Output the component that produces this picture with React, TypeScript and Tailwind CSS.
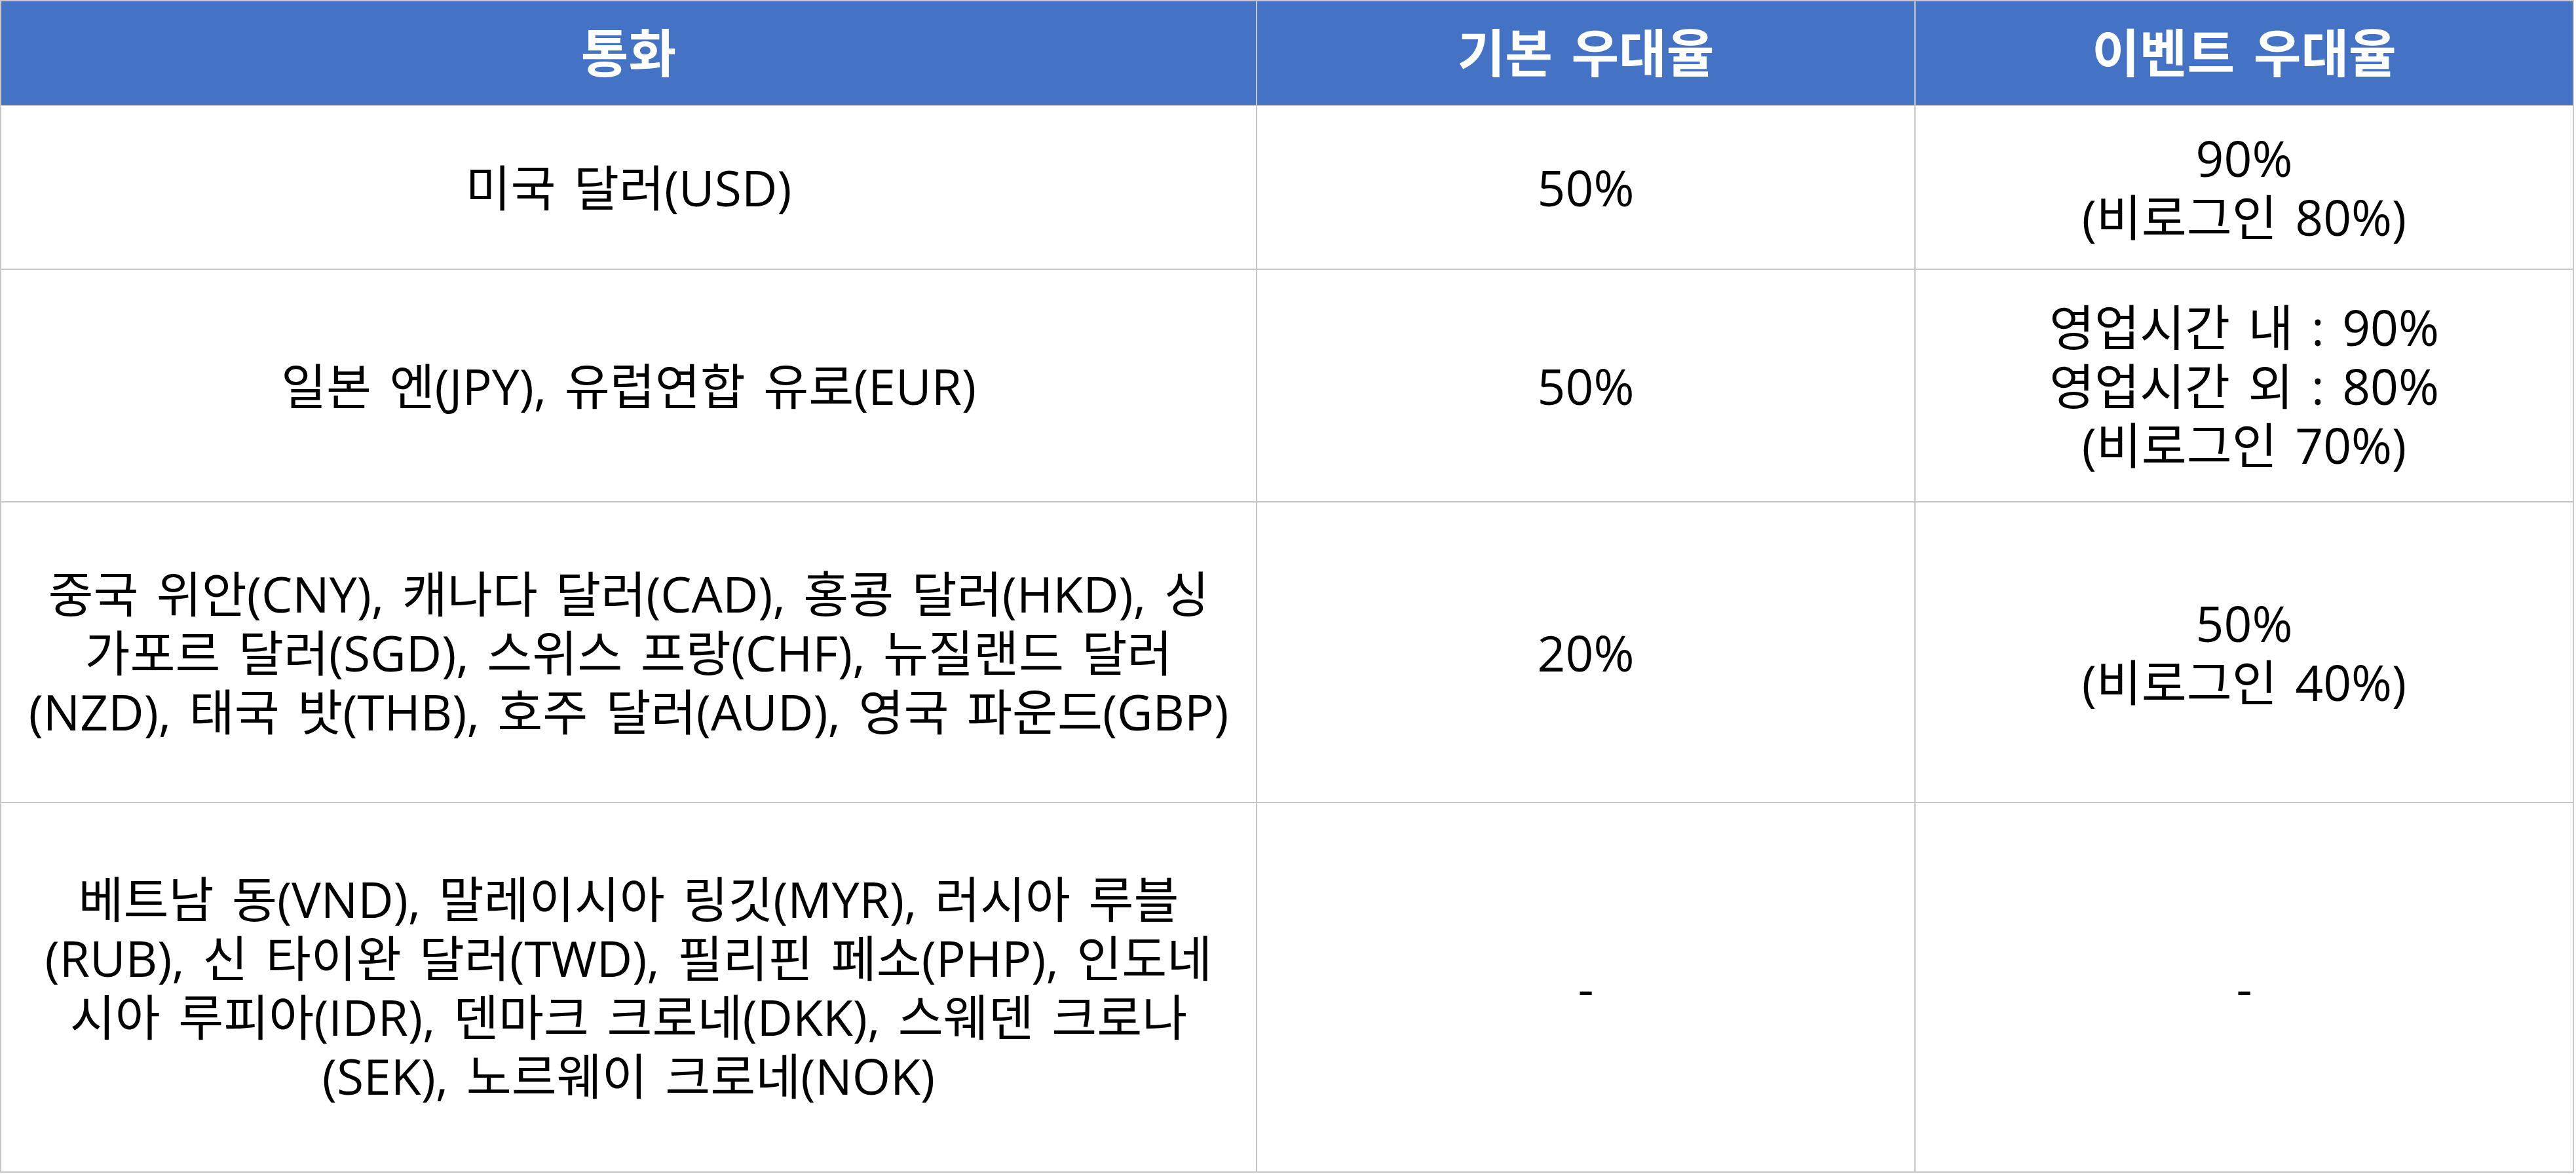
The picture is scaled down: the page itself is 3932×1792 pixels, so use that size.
import React from 'react'

// ── data ─────────────────────────────────────────────
type Row = {
  currency: string[]
  base: string[]
  event: string[]
}

const HEADERS = ['통화', '기본 우대율', '이벤트 우대율']

const ROWS: Row[] = [
  {
    currency: ['미국 달러(USD)'],
    base: ['50%'],
    event: ['90%', '(비로그인 80%)'],
  },
  {
    currency: ['일본 엔(JPY), 유럽연합 유로(EUR)'],
    base: ['50%'],
    event: ['영업시간 내 : 90%', '영업시간 외 : 80%', '(비로그인 70%)'],
  },
  {
    currency: [
      '중국 위안(CNY), 캐나다 달러(CAD), 홍콩 달러(HKD), 싱',
      '가포르 달러(SGD), 스위스 프랑(CHF), 뉴질랜드 달러',
      '(NZD), 태국 밧(THB), 호주 달러(AUD), 영국 파운드(GBP)',
    ],
    base: ['20%'],
    event: ['50%', '(비로그인 40%)'],
  },
  {
    currency: [
      '베트남 동(VND), 말레이시아 링깃(MYR), 러시아 루블',
      '(RUB), 신 타이완 달러(TWD), 필리핀 페소(PHP), 인도네',
      '시아 루피아(IDR), 덴마크 크로네(DKK), 스웨덴 크로나',
      '(SEK), 노르웨이 크로네(NOK)',
    ],
    base: ['-'],
    event: ['-'],
  },
]

// ── cell ─────────────────────────────────────────────
function Cell({ lines }: { lines: string[] }) {
  return (
    <div className="flex flex-col items-center justify-center border-r-2 border-b-2 border-[#c6c6c6] text-center text-[75px] leading-[90px] text-black [word-spacing:8px]">
      {lines.map((l, i) => (
        <div key={i} className="whitespace-nowrap">
          {l}
        </div>
      ))}
    </div>
  )
}

export default function App() {
  return (
    <div
      className="min-h-screen bg-white"
      style={{ fontFamily: '"Open Sans", "Noto Sans CJK KR", sans-serif' }}
    >
      <div className="grid w-[3929px] grid-cols-[1917px_1005px_1005px] grid-rows-[160px_250px_355px_459px_564px] border-t-2 border-l-2 border-[#c6c6c6]">
        {/* header */}
        {HEADERS.map((h) => (
          <div
            key={h}
            className="flex items-center justify-center border-r-2 border-b-2 border-[#c6c6c6] bg-[#4472c4] text-[79px] font-bold leading-[90px] text-white [word-spacing:8px]"
          >
            {h}
          </div>
        ))}

        {/* body */}
        {ROWS.map((r, i) => (
          <React.Fragment key={i}>
            <Cell lines={r.currency} />
            <Cell lines={r.base} />
            <Cell lines={r.event} />
          </React.Fragment>
        ))}
      </div>
    </div>
  )
}
